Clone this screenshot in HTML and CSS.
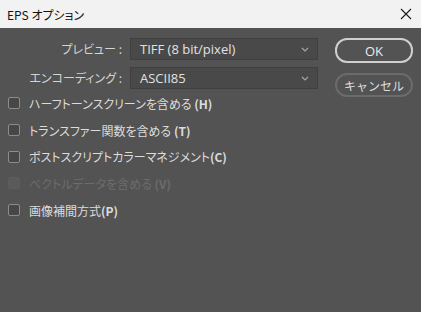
FILE: index.html
```html
<!DOCTYPE html>
<html lang="ja">
<head>
  <meta charset="UTF-8" />
  <meta name="viewport" content="width=device-width, initial-scale=1.0"/>
  <title>EPS オプション</title>
  <link rel="stylesheet" href="styles.css">
</head>
<body>
  <header class="titlebar">
    <span class="title">EPS オプション</span>
    <svg class="close" width="12" height="12" viewBox="0 0 12 12">
      <path d="M1 1 L11 11 M11 1 L1 11" stroke="#1a1a1a" stroke-width="1.1" fill="none"/>
    </svg>
  </header>

  <main class="dialog">
    <label class="label" for="preview">プレビュー :</label>
    <div class="select" id="preview">
      <span>TIFF (8 bit/pixel)</span>
      <svg class="chevron" width="8" height="5" viewBox="0 0 8 5">
        <path d="M1 1 L4 4 L7 1" stroke="#a8a8a8" stroke-width="1.1" fill="none"/>
      </svg>
    </div>

    <div class="buttons">
      <button class="btn btn-primary">OK</button>
      <button class="btn">キャンセル</button>
    </div>

    <label class="label" for="encoding">エンコーディング :</label>
    <div class="select" id="encoding">
      <span>ASCII85</span>
      <svg class="chevron" width="8" height="5" viewBox="0 0 8 5">
        <path d="M1 1 L4 4 L7 1" stroke="#a8a8a8" stroke-width="1.1" fill="none"/>
      </svg>
    </div>

    <div class="options">
      <label class="option"><span class="box"></span><span>ハーフトーンスクリーンを含める <b>(H)</b></span></label>
      <label class="option"><span class="box"></span><span>トランスファー関数を含める <b>(T)</b></span></label>
      <label class="option"><span class="box"></span><span>ポストスクリプトカラーマネジメント<b>(C)</b></span></label>
      <label class="option disabled"><span class="box"></span><span>ベクトルデータを含める <b>(V)</b></span></label>
      <label class="option"><span class="box"></span><span>画像補間方式<b>(P)</b></span></label>
    </div>
  </main>
</body>
</html>
```

FILE: styles.css
```css
body {
  margin: 0;
  background-color: #535353;
  font-family: "Noto Sans CJK JP", "Noto Sans", sans-serif;
  font-feature-settings: "palt";
  color: #dadada;
  height: 312px;
  overflow: hidden;
}

.titlebar {
  height: 28px;
  background-color: #f2f2f2;
  display: flex;
  align-items: center;
  justify-content: space-between;
  padding: 0 9px 0 7px;
}

.title {
  font-size: 12px;
  color: #111;
}

.dialog {
  display: grid;
  grid-template-columns: 115px 188px 78px;
  grid-template-rows: 29px 23px auto;
  column-gap: 7px;
  padding: 10px 0 0 8px;
}

.label {
  font-size: 12px;
  text-align: right;
  line-height: 22px;
  height: 22px;
  color: #d4d4d4;
  padding-right: 1px;
}

.select {
  height: 22px;
  box-sizing: border-box;
  background-color: #494949;
  border: 1px solid #3f3f3f;
  display: flex;
  align-items: center;
  justify-content: space-between;
  padding: 0 8px 0 9px;
  font-family: "Open Sans", "Noto Sans", sans-serif;
  font-size: 13px;
  color: #e2e2e2;
}

.buttons {
  grid-column: 3;
  grid-row: 1 / 4;
  display: flex;
  flex-direction: column;
  gap: 10px;
  margin-left: 10px;
  width: 78px;
}

.btn {
  box-sizing: border-box;
  height: 24px;
  border: 2px solid #6b6b6b;
  border-radius: 12px;
  background: transparent;
  color: #dedede;
  font-family: "Noto Sans CJK JP", sans-serif;
  font-size: 12px;
  padding: 0;
}

.btn-primary {
  height: 25px;
  border-color: #cfcfcf;
  font-family: "Open Sans", sans-serif;
  font-size: 13px;
  color: #ececec;
}

.options {
  grid-column: 1 / 3;
  grid-row: 3;
  display: flex;
  flex-direction: column;
}

.option {
  height: 26.7px;
  display: flex;
  align-items: center;
  gap: 9px;
  font-size: 12px;
  color: #dcdcdc;
  white-space: pre;
}

.option b {
  font-weight: 600;
}

.box {
  width: 12px;
  height: 12px;
  box-sizing: border-box;
  border: 1px solid #8c8c8c;
  border-radius: 2px;
  background-color: #474747;
}

.disabled {
  color: #6c6c6c;
}

.disabled .box {
  border-color: #5d5d5d;
  background-color: #5a5a5a;
}
```
